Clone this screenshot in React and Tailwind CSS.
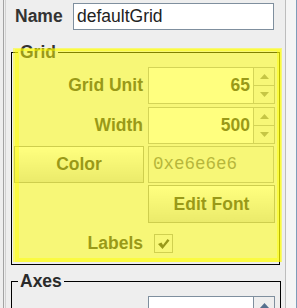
import React from 'react';

const Arrow = ({ up }) => (
  <svg width="9" height="5" viewBox="0 0 9 5">
    <path d={up ? 'M4.5 0 L9 5 L0 5 Z' : 'M0 0 L9 0 L4.5 5 Z'} fill="#8a8a8a" />
  </svg>
);

const Spinner = ({ value }) => (
  <div className="flex h-full w-[127px]">
    <div className="flex flex-1 items-center justify-end border border-[#a9a9ae] bg-white pr-[3px] text-[17.5px] font-bold text-[#333333]">
      {value}
    </div>
    <div className="flex w-[21px] flex-col">
      <div className="flex flex-1 items-center justify-center border border-l-0 border-[#a9a9ae] bg-[#eeeeee]">
        <Arrow up />
      </div>
      <div className="flex flex-1 items-center justify-center border border-l-0 border-t-0 border-[#a9a9ae] bg-[#eeeeee]">
        <Arrow />
      </div>
    </div>
  </div>
);

const Button = ({ children, className }) => (
  <div
    className={`flex items-center justify-center border border-[#9c9c9c] bg-gradient-to-b from-[#ffffff] to-[#d6d6d6] text-[17.5px] font-bold text-[#333333] ${className}`}
  >
    {children}
  </div>
);

export default function App() {
  return (
    <div className="flex h-[308px] w-[297px] overflow-hidden bg-[#eeeeee] font-['Liberation_Sans',Arial,sans-serif]">
      {/* left edge */}
      <div className="ml-[3px] w-[3px] border-l border-r border-l-[#a3a3a3] border-r-[#d2d2d2]" />

      {/* main panel */}
      <div className="flex w-[279px] flex-col">
        {/* Name row */}
        <div className="mt-[3px] flex h-[27px] items-center">
          <div className="w-[67px] pl-[9px] text-[17.5px] font-bold text-[#333333]">Name</div>
          <div className="flex h-full w-[201px] items-center border border-[#7f8f9e] bg-white px-[3px] text-[17.5px] text-[#222222]">
            defaultGrid
          </div>
        </div>

        {/* Grid */}
        <div className="relative ml-[5px] mt-[12px] w-[269px]">
          <fieldset className="border border-black pb-[11px]">
            <legend className="ml-[6px] px-[2px] text-[17.5px] font-bold leading-[20px] text-[#333333]">Grid</legend>

            <div className="mt-[5px] flex h-[37px] items-center">
              <div className="w-[131px] text-right text-[17.5px] font-bold text-[#333333]">Grid Unit</div>
              <div className="ml-[5px] h-full">
                <Spinner value="65" />
              </div>
            </div>

            <div className="mt-[3px] flex h-[37px] items-center">
              <div className="w-[131px] text-right text-[17.5px] font-bold text-[#333333]">Width</div>
              <div className="ml-[5px] h-full">
                <Spinner value="500" />
              </div>
            </div>

            <div className="mt-[2px] flex h-[37px]">
              <Button className="ml-[2px] w-[130px]">Color</Button>
              <div className="ml-[4px] flex w-[126px] items-center border border-[#a9a9ae] bg-[#eeeeee] pl-[4px] font-['Liberation_Mono','Courier_New',monospace] text-[17.5px] text-[#6c6c78]">
                0xe6e6e6
              </div>
            </div>

            <div className="mt-[2px] flex h-[38px]">
              <Button className="ml-[136px] w-[127px]">Edit Font</Button>
            </div>

            <div className="mt-[11px] flex h-[19px] items-center">
              <div className="w-[131px] text-right text-[17.5px] font-bold text-[#333333]">Labels</div>
              <div className="ml-[11px] flex h-[19px] w-[19px] items-center justify-center border border-[#a0a0a0] bg-[#eeeeee]">
                <svg width="13" height="12" viewBox="0 0 13 12">
                  <path d="M1 6 L4.5 4.5 L6 7 L10.5 1 L12.5 2.5 L5.5 11 Z" fill="#333333" />
                </svg>
              </div>
            </div>
          </fieldset>

          {/* disabled highlight overlay */}
          <div className="absolute bottom-[3px] left-[2px] right-[-2px] top-[6px] bg-[#ffff00]/50">
            <div className="absolute bottom-0 left-[2px] right-[1px] top-[1px] border-4 border-t-2 border-[#ffff00]/45" />
          </div>
        </div>

        {/* Axes */}
        <div className="ml-[5px] mt-[6px] w-[270px]">
          <fieldset className="h-[80px] border border-black">
            <legend className="ml-[6px] px-[2px] text-[17.5px] font-bold leading-[20px] text-[#2a2a2a]">Axes</legend>
            <div className="ml-[136px] mt-[5px] flex h-[30px] w-[127px]">
              <div className="flex-1 border border-[#7f8f9e] bg-white" />
              <div className="flex w-[21px] items-start justify-center border border-l-0 border-[#7f8f9e] bg-[#eeeeee] pt-[6px]">
                <svg width="9" height="5" viewBox="0 0 9 5">
                  <path d="M4.5 0 L9 5 L0 5 Z" fill="#56708e" />
                </svg>
              </div>
            </div>
          </fieldset>
        </div>
      </div>

      {/* right edge */}
      <div className="w-[12px] border-l border-r border-l-[#bdbdbd] border-r-[#7f9db9] bg-[#f5f5f5]" />
    </div>
  );
}
